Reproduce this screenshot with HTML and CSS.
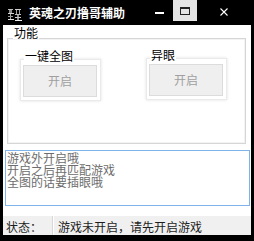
FILE: index.html
```html
<!DOCTYPE html>
<html>
<head>
<meta charset="utf-8">
<link rel="stylesheet" href="styles.css">
</head>
<body>
<div class="window">
  <div class="titlebar">
    <svg class="app-icon" viewBox="0 0 15 13" width="15" height="13">
      <rect x="0" y="0" width="15" height="13" fill="#000"/>
      <rect x="1" y="1" width="5" height="1" fill="#bdbdbd"/>
      <rect x="2" y="2" width="3" height="3" fill="#8c8c8c"/>
      <rect x="1" y="5" width="6" height="1" fill="#d0d0d0"/>
      <rect x="3" y="6" width="1" height="6" fill="#a8a8a8"/>
      <rect x="1" y="8" width="5" height="1" fill="#9a9a9a"/>
      <rect x="1" y="11" width="6" height="1" fill="#e0e0e0"/>
      <rect x="8" y="1" width="6" height="1" fill="#cfcfcf"/>
      <rect x="9" y="2" width="1" height="4" fill="#a0a0a0"/>
      <rect x="12" y="2" width="1" height="4" fill="#a0a0a0"/>
      <rect x="8" y="6" width="6" height="1" fill="#bebebe"/>
      <rect x="10" y="7" width="2" height="5" fill="#8f8f8f"/>
      <rect x="8" y="9" width="6" height="1" fill="#c8c8c8"/>
      <rect x="8" y="12" width="7" height="1" fill="#f0f0f0"/>
    </svg>
    <span class="title">英魂之刃撸哥辅助</span>
    <div class="caption-btns">
      <div class="cb cb-min"><span class="min-dash"></span></div>
      <div class="cb cb-max"><span class="max-box"></span></div>
      <div class="cb cb-close">
        <svg class="close-x" viewBox="0 0 8 8" width="8" height="8"><path d="M0.5 0.5L7.5 7.5M7.5 0.5L0.5 7.5" stroke="#fff" stroke-width="1.1" fill="none"/></svg>
      </div>
    </div>
  </div>
  <div class="client">
    <div class="group">
      <div class="legend">功能</div>
      <div class="group-row">
        <div class="sub sub-left">
          <div class="sub-label">一键全图</div>
          <div class="btn">开启</div>
        </div>
        <div class="sub sub-right">
          <div class="sub-label">异眼</div>
          <div class="btn">开启</div>
        </div>
      </div>
    </div>
    <div class="memo">游戏外开启哦
开启之后再匹配游戏
全图的话要插眼哦</div>
    <div class="statusbar">
      <span class="st-label">状态：</span>
      <span class="st-sep"></span>
      <span class="st-text">游戏未开启，请先开启游戏</span>
    </div>
  </div>
</div>
</body>
</html>
```
FILE: styles.css
```css
html, body {
  margin: 0;
  padding: 0;
  background: #000;
}
body {
  width: 254px;
  height: 241px;
  overflow: hidden;
  font-family: "Noto Sans CJK SC", "Microsoft YaHei", sans-serif;
  font-size: 12px;
  line-height: 12px;
}
.titlebar {
  height: 25px;
  display: flex;
  align-items: center;
}
.app-icon {
  flex: none;
  margin-left: 7px;
  margin-top: 4px;
}
.title {
  color: #fff;
  margin-left: 7px;
  white-space: nowrap;
  font-weight: bold;
}
.caption-btns {
  margin-left: auto;
  margin-right: 3px;
  align-self: flex-start;
  display: flex;
  height: 21px;
}
.cb {
  height: 21px;
  display: flex;
  align-items: center;
  justify-content: center;
}
.cb-min { width: 27px; }
.cb-max { width: 24px; background: #e5e5e5; }
.cb-close { width: 54px; }
.min-dash {
  width: 9px;
  height: 2px;
  background: #fff;
  margin-top: 5px;
}
.max-box {
  box-sizing: border-box;
  width: 10px;
  height: 8px;
  border: 1px solid #222;
  border-top-width: 2px;
  margin-top: 1px;
}
.close-x {
  margin-top: 2px;
}
.client {
  background: #fff;
  margin: 0 3px;
  height: 210px;
  display: flex;
  flex-direction: column;
}
.group {
  box-sizing: border-box;
  margin: 13px 0 0 4px;
  width: 239px;
  height: 106px;
  border: 1px solid #d6d6d6;
  box-shadow: inset 1px 1px 0 #f3f3f3, inset -1px -1px 0 #f3f3f3;
}
.legend {
  width: fit-content;
  margin: -12px 0 0 5px;
  padding: 0 1px;
  background: #fff;
  color: #000;
}
.group-row {
  display: flex;
  align-items: flex-start;
}
.sub {
  box-sizing: border-box;
  width: 81px;
  border: 1px solid #eaeaea;
  box-shadow: 0 0 3px rgba(0, 0, 0, 0.12);
  padding: 0 3px 3px 2px;
}
.sub-left { margin: 20px 0 0 12px; }
.sub-right { margin: 19px 0 0 45px; }
.sub-label {
  width: fit-content;
  margin: -10px 0 0 1px;
  padding: 0 1px;
  background: #fff;
  color: #000;
}
.btn {
  box-sizing: border-box;
  margin-top: 3px;
  height: 32px;
  border: 1px solid #dcdcdc;
  background: #efefef;
  color: #a0a0a0;
  display: flex;
  align-items: center;
  justify-content: center;
}
.memo {
  box-sizing: border-box;
  margin: 6px 0 0 2px;
  width: 245px;
  height: 56px;
  border: 1px solid #7eb4ea;
  padding: 1px 0 0 1px;
  color: #6d6d6d;
  white-space: pre-line;
}
.statusbar {
  box-sizing: border-box;
  margin-top: 10px;
  height: 19px;
  padding-top: 2px;
  background: #f0f0f0;
  display: flex;
  align-items: center;
  color: #1e1e1e;
}
.st-label {
  margin-left: 3px;
}
.st-sep {
  align-self: stretch;
  margin: -2px 0 0 10px;
  width: 1px;
  background: #d7d7d7;
  border-right: 1px solid #fff;
}
.st-text {
  margin-left: 4px;
  white-space: nowrap;
}
```
